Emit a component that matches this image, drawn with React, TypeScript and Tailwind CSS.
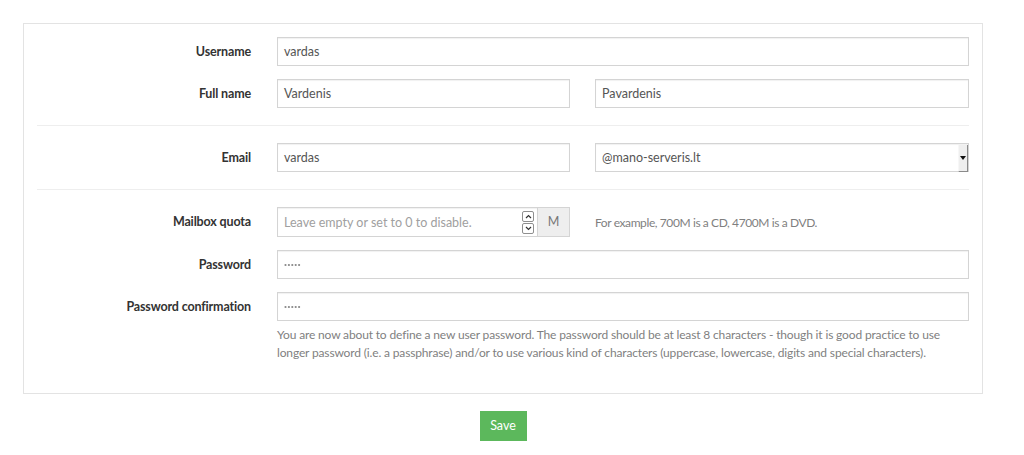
import React from "react";

const inputCls =
  "h-[29px] border border-[#d4d4d4] bg-white px-[6px] pt-[1px] flex items-center text-[12.5px] text-[#555] shadow-[inset_0_1px_1px_rgba(0,0,0,0.06)]";

function Label({ children }: { children: React.ReactNode }) {
  return (
    <div className="w-[240px] shrink-0 pr-[26px] pt-[1px] text-right text-[12.5px] tracking-[-0.15px] font-bold text-[#333]">
      {children}
    </div>
  );
}

function Dots() {
  return (
    <svg width="18" height="4" viewBox="0 0 18 4">
      {[0, 1, 2, 3, 4].map((i) => (
        <circle key={i} cx={1.5 + i * 3.4} cy={2} r={1.1} fill="#888" />
      ))}
    </svg>
  );
}

export default function App() {
  return (
    <div className="w-[1024px] h-[455px] bg-white pt-[23px] font-['Lato','Liberation_Sans',sans-serif]">
      <div className="ml-[23px] w-[960px] border border-[#e3e3e3] pl-[13px] pr-[13px] pt-[13px] pb-[31px]">
        {/* Username */}
        <div className="flex items-center">
          <Label>Username</Label>
          <div className={inputCls + " w-[692px]"}>vardas</div>
        </div>
        {/* Full name */}
        <div className="flex items-center mt-[13px]">
          <Label>Full name</Label>
          <div className={inputCls + " w-[293px]"}>Vardenis</div>
          <div className={inputCls + " w-[374px] ml-[25px]"}>Pavardenis</div>
        </div>
        <div className="h-px bg-[#eeeeee] mt-[17px] mb-[17px]" />
        {/* Email */}
        <div className="flex items-center">
          <Label>Email</Label>
          <div className={inputCls + " w-[293px]"}>vardas</div>
          <div className={inputCls + " w-[374px] ml-[25px] justify-between pr-0 pt-0"}>
            <span className="pt-[1px]">@mano-serveris.lt</span>
            <div className="h-[27px] w-[10px] bg-[#efefef] border-r border-b border-[#8a8a8a] border-l border-l-[#f7f7f7] flex items-center justify-center">
              <svg width="6" height="4" viewBox="0 0 6 4">
                <path d="M0 0 L6 0 L3 4 Z" fill="#111" />
              </svg>
            </div>
          </div>
        </div>
        <div className="h-px bg-[#eeeeee] mt-[17px] mb-[17px]" />
        {/* Mailbox quota */}
        <div className="flex items-center">
          <Label>Mailbox quota</Label>
          <div className="flex w-[293px]">
            <div className={inputCls + " flex-1 justify-between pr-[3px] pt-0 h-[30px] text-[#a0a0a0]"}>
              <span className="pt-[1px]">Leave empty or set to 0 to disable.</span>
              <div className="flex flex-col gap-[1px]">
                <div className="w-[12px] h-[11px] border border-[#8f8f8f] rounded-[2px] flex items-center justify-center bg-white">
                  <svg width="7" height="5" viewBox="0 0 7 5">
                    <path d="M1 4 L3.5 1.5 L6 4" stroke="#333" strokeWidth="1.2" fill="none" />
                  </svg>
                </div>
                <div className="w-[12px] h-[11px] border border-[#8f8f8f] rounded-[2px] flex items-center justify-center bg-white">
                  <svg width="7" height="5" viewBox="0 0 7 5">
                    <path d="M1 1 L3.5 3.5 L6 1" stroke="#333" strokeWidth="1.2" fill="none" />
                  </svg>
                </div>
              </div>
            </div>
            <div className="h-[30px] w-[32px] border border-l-0 border-[#d4d4d4] bg-[#eeeeee] flex items-center justify-center pt-[1px] text-[12.5px] text-[#777]">
              M
            </div>
          </div>
          <div className="ml-[25px] pt-[1px] text-[12px] tracking-[-0.4px] text-[#7f7f7f]">
            For example, 700M is a CD, 4700M is a DVD.
          </div>
        </div>
        {/* Password */}
        <div className="flex items-center mt-[13px]">
          <Label>Password</Label>
          <div className={inputCls + " w-[692px]"}>
            <Dots />
          </div>
        </div>
        {/* Password confirmation */}
        <div className="flex items-center mt-[13px]">
          <Label>Password confirmation</Label>
          <div className={inputCls + " w-[692px]"}>
            <Dots />
          </div>
        </div>
        <div className="flex">
          <div className="w-[240px] shrink-0" />
          <p className="w-[676px] mt-[5px] text-[12px] tracking-[-0.15px] leading-[18px] text-[#7f7f7f]">
            You are now about to define a new user password. The password should be at least 8 characters - though it is good practice to use longer password (i.e. a passphrase) and/or to use various kind of characters (uppercase, lowercase, digits and special characters).
          </p>
        </div>
      </div>
      <div className="w-[960px] ml-[23px] flex justify-center mt-[17px]">
        <button className="h-[30px] w-[47px] bg-[#5cb85c] text-white text-[12.5px] flex items-center justify-center">
          Save
        </button>
      </div>
    </div>
  );
}
